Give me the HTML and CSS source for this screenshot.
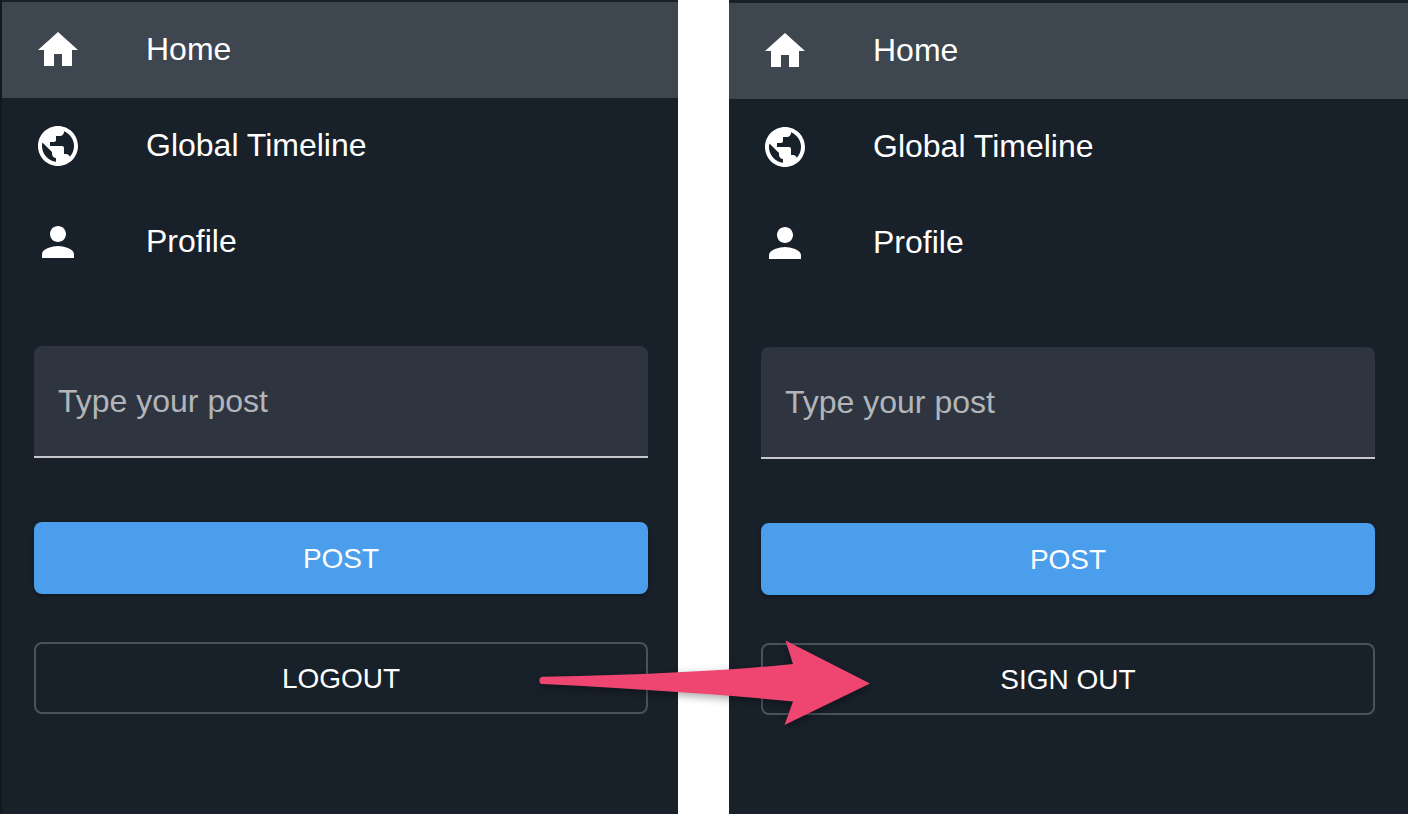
FILE: index.html
```html
<!DOCTYPE html>
<html lang="en">
<head>
  <meta charset="UTF-8">
  <title>Logout to Sign out</title>
  <link rel="stylesheet" href="styles.css">
</head>
<body>
  <section class="panel panel-before">
    <nav class="menu">
      <a class="menu-item active" href="#">
        <svg class="icon" viewBox="0 0 24 24"><path d="M10 20v-6h4v6h5v-8h3L12 3 2 12h3v8z"/></svg>
        <span>Home</span>
      </a>
      <a class="menu-item" href="#">
        <svg class="icon" viewBox="0 0 24 24"><path d="M12 2C6.48 2 2 6.48 2 12s4.48 10 10 10 10-4.48 10-10S17.52 2 12 2zm-1 17.93c-3.95-.49-7-3.85-7-7.93 0-.62.08-1.21.21-1.79L9 15v1c0 1.1.9 2 2 2v1.93zm6.9-2.54c-.26-.81-1-1.39-1.9-1.39h-1v-3c0-.55-.45-1-1-1H8v-2h2c.55 0 1-.45 1-1V7h2c1.1 0 2-.9 2-2v-.41c2.93 1.19 5 4.06 5 7.41 0 2.08-.8 3.97-2.1 5.39z"/></svg>
        <span>Global Timeline</span>
      </a>
      <a class="menu-item" href="#">
        <svg class="icon" viewBox="0 0 24 24"><path d="M12 12c2.21 0 4-1.79 4-4s-1.79-4-4-4-4 1.79-4 4 1.79 4 4 4zm0 2c-2.67 0-8 1.34-8 4v2h16v-2c0-2.66-5.33-4-8-4z"/></svg>
        <span>Profile</span>
      </a>
    </nav>
    <div class="compose">
      <div class="post-field">Type your post</div>
      <button class="btn btn-post">POST</button>
      <button class="btn btn-outline">LOGOUT</button>
    </div>
  </section>

  <section class="panel panel-after">
    <nav class="menu">
      <a class="menu-item active" href="#">
        <svg class="icon" viewBox="0 0 24 24"><path d="M10 20v-6h4v6h5v-8h3L12 3 2 12h3v8z"/></svg>
        <span>Home</span>
      </a>
      <a class="menu-item" href="#">
        <svg class="icon" viewBox="0 0 24 24"><path d="M12 2C6.48 2 2 6.48 2 12s4.48 10 10 10 10-4.48 10-10S17.52 2 12 2zm-1 17.93c-3.95-.49-7-3.85-7-7.93 0-.62.08-1.21.21-1.79L9 15v1c0 1.1.9 2 2 2v1.93zm6.9-2.54c-.26-.81-1-1.39-1.9-1.39h-1v-3c0-.55-.45-1-1-1H8v-2h2c.55 0 1-.45 1-1V7h2c1.1 0 2-.9 2-2v-.41c2.93 1.19 5 4.06 5 7.41 0 2.08-.8 3.97-2.1 5.39z"/></svg>
        <span>Global Timeline</span>
      </a>
      <a class="menu-item" href="#">
        <svg class="icon" viewBox="0 0 24 24"><path d="M12 12c2.21 0 4-1.79 4-4s-1.79-4-4-4-4 1.79-4 4 1.79 4 4 4zm0 2c-2.67 0-8 1.34-8 4v2h16v-2c0-2.66-5.33-4-8-4z"/></svg>
        <span>Profile</span>
      </a>
    </nav>
    <div class="compose">
      <div class="post-field">Type your post</div>
      <button class="btn btn-post">POST</button>
      <button class="btn btn-outline">SIGN OUT</button>
    </div>
  </section>

  <!-- callout arrow, sits over both panels -->
  <svg class="arrow" viewBox="0 0 1408 814">
    <path d="M543 676.8 Q700 674 793 664 L785.5 640.5 L870 683.5 L784.5 725 L793 701.5 Q700 692 543 684 A3.6 3.6 0 0 1 543 676.8z"/>
  </svg>
</body>
</html>
```

FILE: styles.css
```css
html, body {
  height: 100%;
}
body {
  margin: 0;
  display: flex;
  justify-content: space-between;
  background: white;
  color: white;
  font-family: 'Liberation Sans', Arial, sans-serif;
  overflow: hidden;
}
.panel {
  background: #18202a;
  box-sizing: border-box;
  height: 814px;
}
.panel-before {
  width: 678px;
  padding-top: 2px;
  border-left: 2px solid #14181c;
}
.panel-after {
  width: 679px;
  padding-top: 3px;
}
.menu {
  display: flex;
  flex-direction: column;
}
.menu-item {
  display: flex;
  align-items: center;
  gap: 64px;
  height: 96px;
  padding-left: 32px;
  color: white;
  font-size: 32px;
  text-decoration: none;
}
.menu-item span {
  padding-bottom: 2px;
}
.menu-item.active {
  background: #3e464f;
}
.icon {
  width: 48px;
  height: 48px;
  fill: white;
}
.compose {
  display: flex;
  flex-direction: column;
  width: 614px;
  margin: 56px 0 0 32px;
}
.post-field {
  box-sizing: border-box;
  height: 112px;
  padding: 0 24px;
  display: flex;
  align-items: center;
  background: #2e3540;
  border-bottom: 2px solid #c5c8cc;
  border-radius: 8px 8px 0 0;
  color: #b2b5b9;
  font-size: 32px;
}
.btn {
  box-sizing: border-box;
  height: 72px;
  padding-top: 2px;
  border-radius: 8px;
  color: white;
  font-family: inherit;
  font-size: 28px;
}
.btn-post {
  margin-top: 64px;
  background: #4a9eeb;
  border: none;
  box-shadow: 0 2px 4px rgba(0, 0, 0, 0.3);
}
.btn-outline {
  margin-top: 48px;
  background: transparent;
  border: 2px solid #4b525b;
}
.arrow {
  position: absolute;
  left: 0;
  top: 0;
  width: 1408px;
  height: 814px;
  fill: #ee4670;
  filter: drop-shadow(0 3px 4px rgba(0, 0, 0, 0.35));
}
```
